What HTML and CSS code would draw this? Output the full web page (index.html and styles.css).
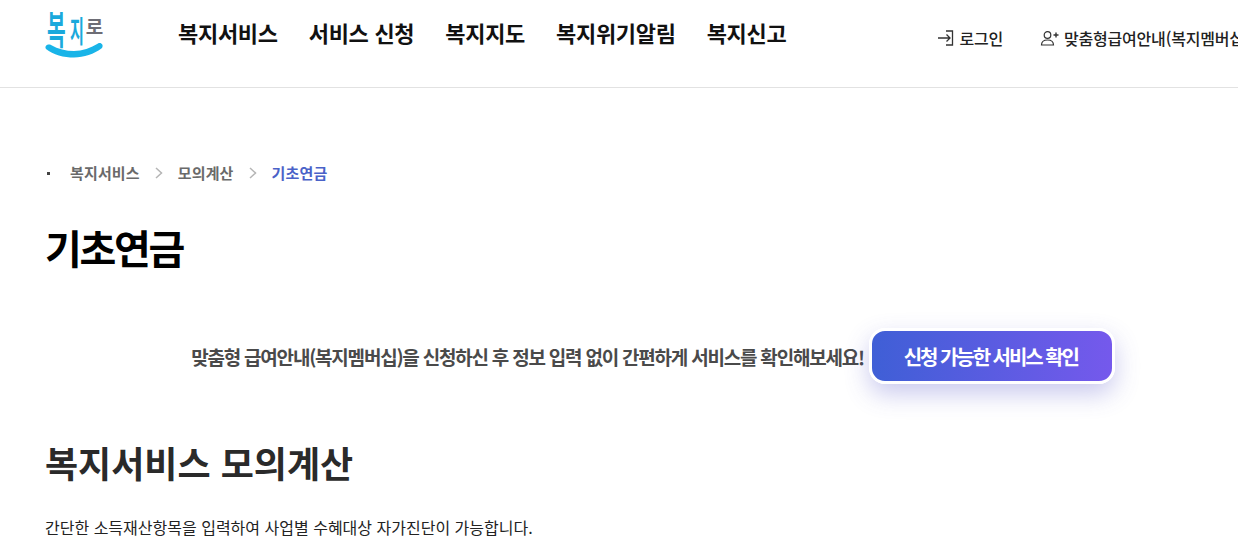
FILE: index.html
```html
<!DOCTYPE html>
<html lang="ko">
<head>
    <meta charset="UTF-8">
    <meta name="viewport" content="width=device-width, initial-scale=1.0">
    <title>기초연금</title>
    <link rel="stylesheet" href="styles.css">
</head>
<body>
    <header class="header">
        <a class="logo" href="#">
            <span class="logo-text">
                <span class="logo-bok">복</span>
                <span class="logo-ji">지</span>
                <span class="logo-ro">로</span>
            </span>
            <svg class="logo-smile" width="60" height="16" viewBox="0 0 60 16">
                <path d="M2 7C0 4 4 1.500 7 3C14 7 22 9 30 9C38 9 47 6 54 1.500C57 0 60 3 58 6C50 12 40 15.500 30 15.500C20 15.500 9 13 2 7Z" fill="#19b4e8"/>
            </svg>
        </a>
        <nav class="gnb">
            <a href="#">복지서비스</a>
            <a href="#">서비스 신청</a>
            <a href="#">복지지도</a>
            <a href="#">복지위기알림</a>
            <a href="#">복지신고</a>
        </nav>
        <div class="util">
            <a class="util-login" href="#">
                <svg width="17" height="16" viewBox="0 0 17 16">
                    <path d="M1 8H13M9.500 4.500L13 8L9.500 11.500M9 1H15.500V15H9" fill="none" stroke="#333" stroke-width="1.300"/>
                </svg>
                로그인
            </a>
            <a class="util-member" href="#">
                <svg width="19" height="16" viewBox="0 0 19 16">
                    <circle cx="7.500" cy="5" r="3.300" fill="none" stroke="#333" stroke-width="1.200"/>
                    <path d="M1.500 15C1.500 11 4.500 10 7.500 10S13.500 11 13.500 15Z" fill="none" stroke="#333" stroke-width="1.200"/>
                    <path d="M13.500 5H18.500M16 2.500V7.500" fill="none" stroke="#333" stroke-width="1.400"/>
                </svg>
                맞춤형급여안내(복지멤버십)
            </a>
        </div>
    </header>

    <main class="content">
        <ul class="breadcrumb">
            <li>복지서비스</li>
            <li class="sep">
                <svg width="8" height="12" viewBox="0 0 8 12"><path d="M1 1L6.500 6L1 11" fill="none" stroke="#b5b5b5" stroke-width="1.500"/></svg>
            </li>
            <li>모의계산</li>
            <li class="sep">
                <svg width="8" height="12" viewBox="0 0 8 12"><path d="M1 1L6.500 6L1 11" fill="none" stroke="#b5b5b5" stroke-width="1.500"/></svg>
            </li>
            <li class="current">기초연금</li>
        </ul>

        <h1 class="page-title">기초연금</h1>

        <div class="notice">
            <p>맞춤형 급여안내(복지멤버십)을 신청하신 후 정보 입력 없이 간편하게 서비스를 확인해보세요!</p>
            <button class="notice-btn">신청 가능한 서비스 확인</button>
        </div>

        <h2 class="section-title">복지서비스 모의계산</h2>
        <p class="section-desc">간단한 소득재산항목을 입력하여 사업별 수혜대상 자가진단이 가능합니다.</p>
    </main>
</body>
</html>
```

FILE: styles.css
```css
html, body {
    margin: 0;
    padding: 0;
    overflow: hidden;
    background: #fff;
}
body {
    font-family: "Noto Sans CJK KR", "Noto Sans", sans-serif;
    color: #222;
}
a {
    color: inherit;
    text-decoration: none;
}
.header {
    display: flex;
    align-items: flex-start;
    height: 87px;
    padding-left: 44px;
    border-bottom: 1px solid #e2e2e2;
    white-space: nowrap;
}
.logo {
    display: block;
    width: 60px;
    margin-right: 74px;
    padding-top: 6px;
}
.logo-text {
    display: flex;
    align-items: flex-end;
    height: 36px;
    padding-left: 3px;
    line-height: 1;
    font-weight: 700;
}
.logo-bok {
    color: #1aa9dc;
    font-size: 26px;
    transform: scale(0.78, 1.5);
    transform-origin: left bottom;
    margin: 0 -1px -5px 0;
}
.logo-ji {
    color: #1aa9dc;
    font-size: 21px;
    transform: scale(0.72, 1.4);
    transform-origin: left bottom;
    margin: 0 -3.600px -3px 0;
}
.logo-ro {
    color: #6d6d75;
    font-size: 19px;
    margin-bottom: 7px;
}
.logo-smile {
    display: block;
}
.gnb {
    display: flex;
    gap: 31px;
    padding-top: 16px;
    font-size: 22px;
    line-height: 32px;
    font-weight: 700;
    letter-spacing: -0.3px;
    color: #111;
}
.util {
    display: flex;
    gap: 37px;
    margin-left: 151px;
    padding-top: 26px;
    font-size: 16px;
    line-height: 24px;
    font-weight: 500;
    letter-spacing: -0.2px;
    color: #222;
}
.util a {
    display: flex;
    align-items: center;
    gap: 5px;
}
.content {
    padding: 0 45px;
}
.breadcrumb {
    display: flex;
    align-items: center;
    margin: 73px 0 0;
    padding: 0 0 0 25px;
    list-style: none;
    font-size: 15px;
    line-height: 24px;
    font-weight: 700;
    letter-spacing: 0.15px;
    color: #6a6a6a;
    position: relative;
}
.breadcrumb::before {
    content: "";
    position: absolute;
    left: 2px;
    top: 11px;
    width: 3px;
    height: 3px;
    background: #444;
}
.breadcrumb .sep {
    display: flex;
    margin: 0 15px;
}
.breadcrumb .current {
    color: #4a62c8;
}
.page-title {
    margin: 32px 0 0;
    font-size: 40px;
    line-height: 60px;
    font-weight: 700;
    letter-spacing: -2.3px;
    color: #000;
}
.notice {
    display: flex;
    justify-content: center;
    align-items: center;
    gap: 5px;
    margin: 51px 0 0;
    padding-left: 68px;
}
.notice p {
    margin: 0;
    font-size: 19px;
    font-weight: 700;
    letter-spacing: -1.220px;
    color: #4a4a4a;
}
.notice-btn {
    width: 246px;
    height: 56px;
    padding: 0 8px 0 6px;
    border: 3px solid #fff;
    border-radius: 16px;
    background: linear-gradient(90deg, #3f5fd6, #7559ec);
    box-shadow: 0 10px 24px rgba(80, 80, 200, 0.3);
    color: #fff;
    font-family: inherit;
    font-size: 20px;
    font-weight: 700;
    letter-spacing: -2.050px;
}
.section-title {
    margin: 52px 0 0;
    font-size: 36px;
    line-height: 52px;
    font-weight: 700;
    color: #2a2a2a;
}
.section-desc {
    margin: 27px 0 0;
    font-size: 16px;
    line-height: 24px;
    color: #222;
}
```
